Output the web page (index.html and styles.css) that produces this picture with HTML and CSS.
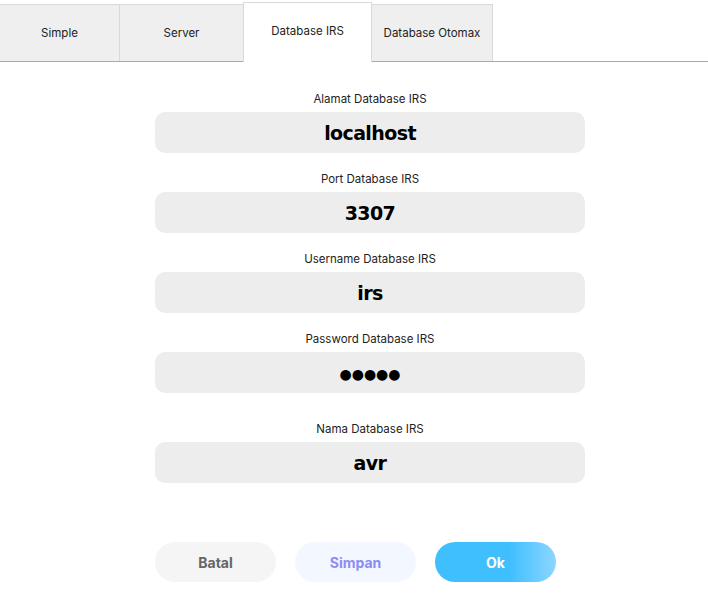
FILE: index.html
```html
<!DOCTYPE html>
<html lang="en">
<head>
    <meta charset="UTF-8">
    <meta name="viewport" content="width=device-width, initial-scale=1.0">
    <title>Pengaturan Database IRS</title>
    <link rel="stylesheet" href="styles.css">
</head>
<body>
    <div class="tabs">
        <div class="tab tab-simple">Simple</div>
        <div class="tab tab-server">Server</div>
        <div class="tab tab-irs active">Database IRS</div>
        <div class="tab tab-otomax">Database Otomax</div>
    </div>

    <form class="settings">
        <div class="field">
            <label for="host">Alamat Database IRS</label>
            <input type="text" id="host" value="localhost">
        </div>
        <div class="field">
            <label for="port">Port Database IRS</label>
            <input type="text" id="port" value="3307">
        </div>
        <div class="field">
            <label for="user">Username Database IRS</label>
            <input type="text" id="user" value="irs">
        </div>
        <div class="field">
            <label for="pass">Password Database IRS</label>
            <input type="text" id="pass" class="secret" value="●●●●●">
        </div>
        <div class="field field-gap">
            <label for="dbname">Nama Database IRS</label>
            <input type="text" id="dbname" value="avr">
        </div>

        <div class="button-group">
            <button type="button" class="cancel-btn">Batal</button>
            <button type="button" class="save-btn">Simpan</button>
            <button type="button" class="ok-btn">Ok</button>
        </div>
    </form>
</body>
</html>
```

FILE: styles.css
```css
body {
    margin: 0;
    background-color: white;
    font-family: Inter, "Open Sans", sans-serif;
    color: #222;
}

.tabs {
    display: flex;
    align-items: flex-end;
    height: 61px;
    border-bottom: 1px solid #a9a9a9;
}

.tab {
    box-sizing: border-box;
    height: 57px;
    display: flex;
    align-items: center;
    justify-content: center;
    background-color: #efefef;
    border: 1px solid #d9d9d9;
    border-bottom: none;
    border-left: none;
    font-size: 11.5px;
    color: #222;
}

.tab-simple {
    width: 120px;
}

.tab-server {
    width: 124px;
}

.tab-irs {
    width: 129px;
}

.tab-otomax {
    width: 121px;
}

.tab.active {
    height: 60px;
    margin-bottom: -1px;
    padding-bottom: 3px;
    background-color: white;
    border-left: 1px solid #d9d9d9;
    margin-left: -1px;
}

.settings {
    width: 430px;
    margin: 30px 0 0 155px;
}

.field {
    margin-bottom: 19px;
}

.field-gap {
    margin-top: 29px;
}

.field label {
    display: block;
    text-align: center;
    font-size: 11.5px;
    line-height: 14px;
    margin-bottom: 6px;
    padding-top: 1px;
    margin-top: -1px;
    color: #222;
}

.field input {
    box-sizing: border-box;
    display: block;
    width: 100%;
    height: 41px;
    border: none;
    border-radius: 10px;
    background-color: #ededed;
    text-align: center;
    font-family: "DejaVu Sans", sans-serif;
    font-weight: bold;
    font-size: 19px;
    letter-spacing: -0.6px;
    padding-top: 2px;
    color: black;
    outline: none;
}

.field input.secret {
    font-size: 14px;
    letter-spacing: 0;
    padding-top: 3px;
}

.button-group {
    display: flex;
    gap: 19px;
    margin-top: 59px;
}

button {
    width: 121px;
    height: 40px;
    border: none;
    border-radius: 20px;
    font-family: Inter, "Open Sans", sans-serif;
    font-weight: bold;
    font-size: 14px;
    cursor: pointer;
}

.cancel-btn {
    background-color: #f5f5f5;
    color: #666;
}

.save-btn {
    background-color: #f3f7ff;
    color: #8c8cf7;
}

.ok-btn {
    background: linear-gradient(to right, #40bfff 0%, #40bfff 62%, #8dd6ff 100%);
    color: white;
}
```
